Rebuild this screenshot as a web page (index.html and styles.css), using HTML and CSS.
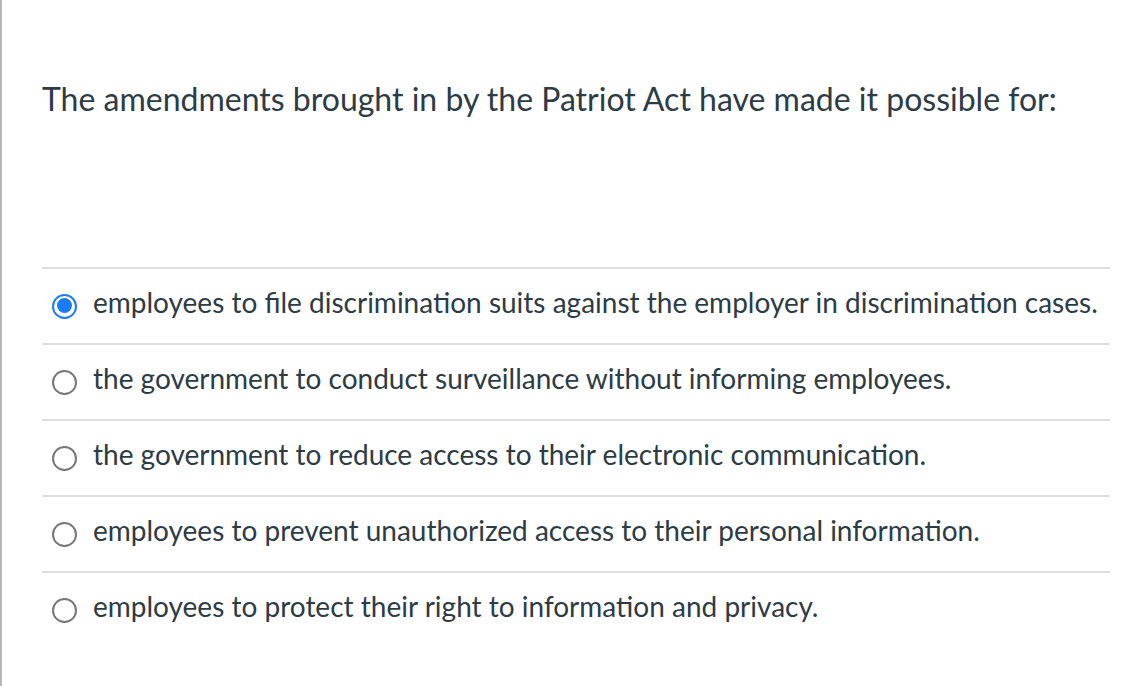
FILE: index.html
```html
<!DOCTYPE html>
<html>
<head>
<meta charset="utf-8">
<link rel="stylesheet" href="styles.css">
</head>
<body>
<div class="page">
  <div class="question">
    <p class="prompt">The amendments brought in by the Patriot Act have made it possible for:</p>
    <div class="answers">
      <label class="answer"><span class="radio checked"></span><span class="text">employees to file discrimination suits against the employer in discrimination cases.</span></label>
      <label class="answer"><span class="radio"></span><span class="text">the government to conduct surveillance without informing employees.</span></label>
      <label class="answer"><span class="radio"></span><span class="text">the government to reduce access to their electronic communication.</span></label>
      <label class="answer"><span class="radio"></span><span class="text">employees to prevent unauthorized access to their personal information.</span></label>
      <label class="answer"><span class="radio"></span><span class="text">employees to protect their right to information and privacy.</span></label>
    </div>
  </div>
</div>
</body>
</html>
```

FILE: styles.css
```css
html, body {
  margin: 0;
  padding: 0;
  background: #ffffff;
}
body {
  font-family: Lato, "Open Sans", sans-serif;
  color: #2d3b45;
}
.page {
  min-height: 686px;
  border-left: 2px solid #b5b5b5;
  box-sizing: border-box;
}
.question {
  padding: 80px 32px 0 40px;
}
.prompt {
  margin: 0 0 149px 0;
  font-size: 32px;
  line-height: 38px;
}
.answers {
  display: flex;
  flex-direction: column;
}
.answer {
  display: flex;
  align-items: center;
  gap: 16px;
  height: 74px;
  border-top: 2px solid #dedede;
  padding-left: 10px;
  font-size: 28px;
}
.radio {
  width: 25px;
  height: 25px;
  box-sizing: border-box;
  border-radius: 50%;
  border: 2px solid #777777;
  flex: none;
  position: relative;
}
.radio.checked {
  border: 2.5px solid #1a7cf8;
}
.radio.checked::after {
  content: "";
  position: absolute;
  left: 2.5px;
  top: 2.5px;
  width: 15px;
  height: 15px;
  border-radius: 50%;
  background: #1a7cf8;
}
.text {
  line-height: 30px;
  margin-bottom: 8px;
  white-space: nowrap;
}
```
